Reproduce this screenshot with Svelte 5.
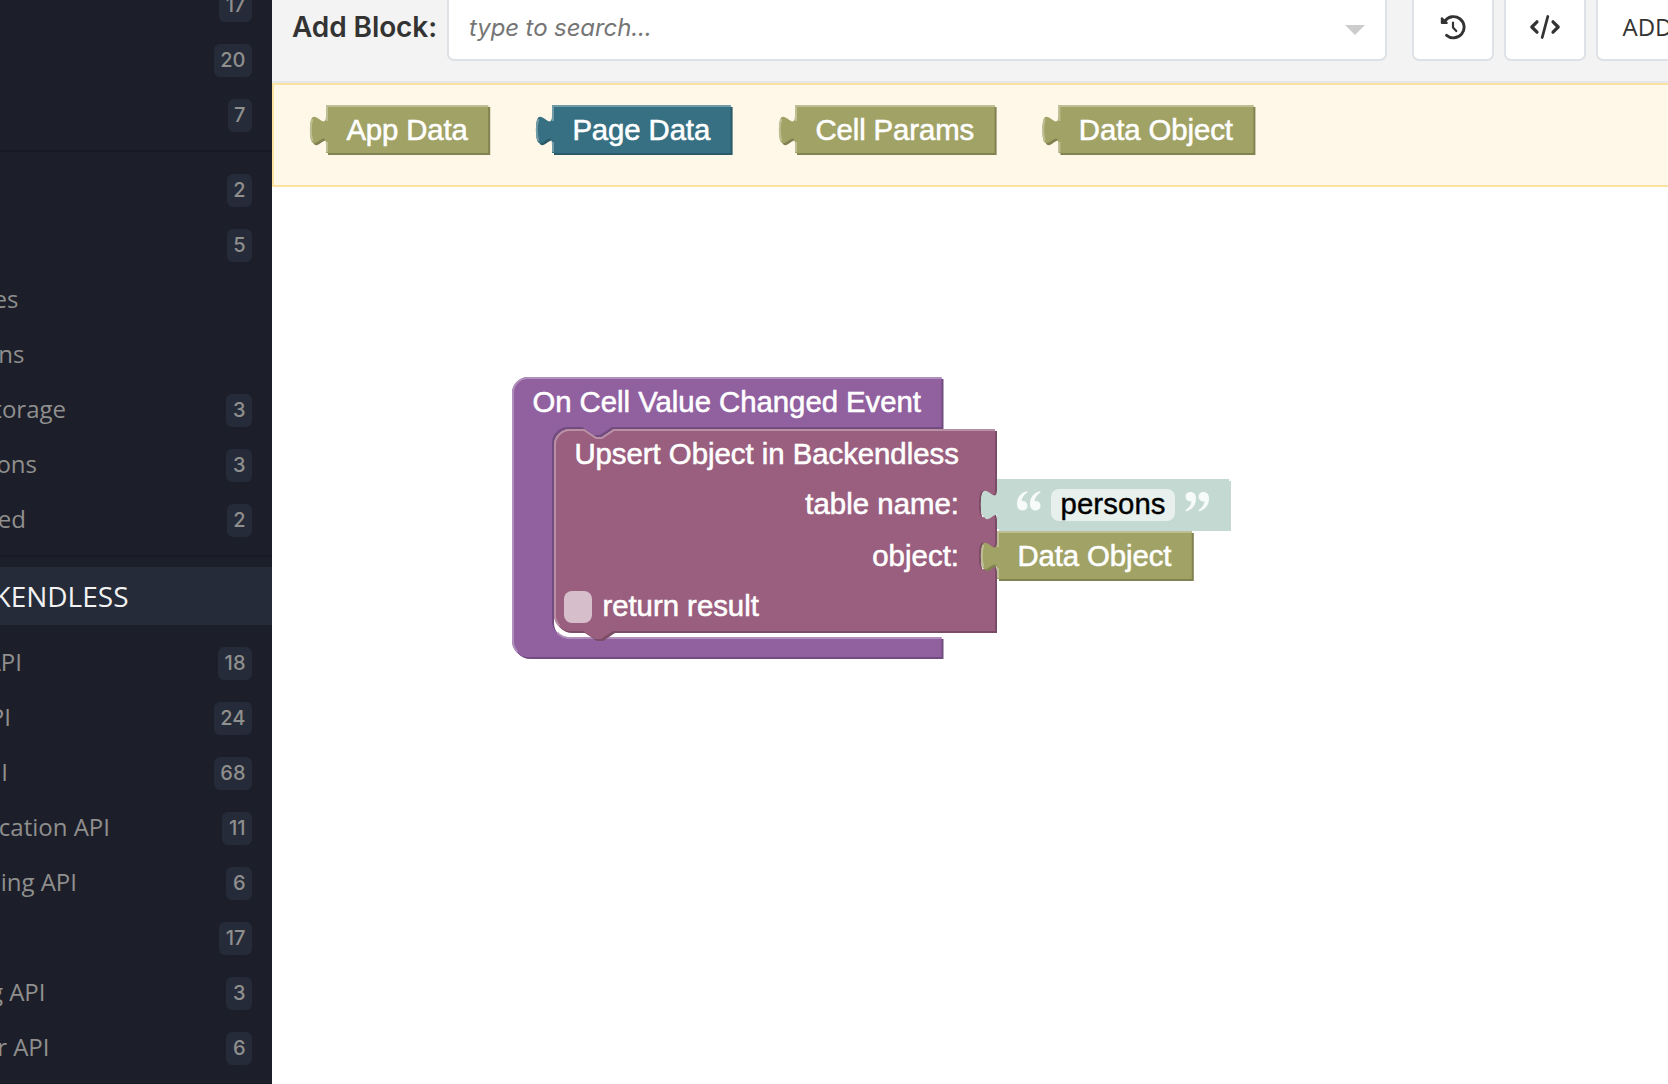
<script>
  const groups = [
    {
      first: true,
      rows: [
        { count: 17 },
        { count: 20 },
        { count: 7 }
      ]
    },
    {
      rows: [
        { count: 2 },
        { count: 5 },
        { label: 'es', end: 18.5 },
        { label: 'ns', end: 24.5 },
        { label: 'torage', end: 66, count: 3 },
        { label: 'ons', end: 37, count: 3 },
        { label: 'ed', end: 26, count: 2 }
      ]
    },
    {
      title: 'KENDLESS',
      rows: [
        { label: 'API', end: 22, count: 18 },
        { label: 'PI', end: 11, count: 24 },
        { label: 'I', end: 8, count: 68 },
        { label: 'cation API', end: 110, count: 11 },
        { label: 'ing API', end: 77, count: 6 },
        { count: 17 },
        { label: 'g API', end: 45.5, count: 3 },
        { label: 'r API', end: 49.5, count: 6 }
      ]
    }
  ];

  const olive = { main: '#a1a265', light: '#bdbe93', dark: '#818251' };
  const teal = { main: '#367082', light: '#729ba8', dark: '#2b5a68' };
  const mint = { main: '#c3d9d1', light: '#c3d9d1', dark: '#c3d9d1' };

  const recent = [
    { label: 'App Data', x: 54, w: 81.1, colors: olive },
    { label: 'Page Data', x: 280, w: 89.3, colors: teal },
    { label: 'Cell Params', x: 523, w: 99.8, colors: olive },
    { label: 'Data Object', x: 786.4, w: 97.5, colors: olive }
  ];

  const valuePath = (w, h) =>
    `M 0,0 H ${w} V ${h} H 0 V 20 c 0,-10 -8,8 -8,-7.5 s 8,2.5 8,-7.5 z`;
  const valueLight = (w, h) =>
    `M 0.5,${h - 0.5} V 18.5 m -7.36,-0.5 q -1.52,-5.5 0,-11 m 7.36,1 V 0.5 H ${w}`;

  const eventPath =
    'M 0,8 A 8,8 0 0,1 8,0 H 214.75 V 25 H 50 l -6,4 -3,0 -6,-4 h -7 a 8,8 0 0,0 -8,8 V 122 a 8,8 0 0,0 8,8 H 214.75 V 140 H 8 a 8,8 0 0,1 -8,-8 z';
  const socket = 'v 5 c 0,10 -8,-8 -8,7.5 s 8,-2.5 8,7.5';
  const upsertPath =
    `M 0,8 A 8,8 0 0,1 8,0 H 15 l 6,4 3,0 6,-4 H 220.5 V 25 ${socket} V 51 ${socket} V 101 H 29.5 l -6,4 -3,0 -6,-4 H 8 a 8,8 0 0,1 -8,-8 z`;
</script>

{#snippet valueBlock(x, y, w, h, colors, label)}
  <g transform="translate({x},{y}) scale(2)">
    <path d={valuePath(w, h)} transform="translate(1,1)" fill={colors.dark} />
    <path d={valuePath(w, h)} fill={colors.main} />
    <path d={valueLight(w, h)} fill="none" stroke={colors.light} />
    {#if label}
      <text x="10.2" y="17.5" textLength={w - 20.4}>{label}</text>
    {/if}
  </g>
{/snippet}

<div class="page">
  <aside class="sidebar">
    {#each groups as group}
      {#if group.title}
        <div class="title"><span style="width: 128.5px">{group.title}</span></div>
      {/if}
      <div class="group" class:first={group.first}>
        {#each group.rows as row}
          <div class="row">
            <span class="label" style="width: {row.end ?? 0}px">{row.label ?? ''}</span>
            {#if row.count}<span class="badge">{row.count}</span>{/if}
          </div>
        {/each}
      </div>
    {/each}
  </aside>

  <main class="main">
    <header class="toolbar">
      <strong class="caption">Add Block:</strong>
      <div class="search">
        <span class="placeholder">type to search...</span>
        <i class="caret"></i>
      </div>
      <div class="button">
        <svg width="26" height="26" viewBox="0 0 26 26" fill="none" stroke="#333" stroke-linecap="round" stroke-linejoin="round">
          <path d="M4.8 7.2A10.6 10.6 0 1 1 6.6 21.3" stroke-width="2.9" />
          <path d="M1.8 4.2 L1.8 9 L6.8 9 Z" stroke-width="2" fill="#333" />
          <path d="M13 8.5 V13.4 L16.3 17" stroke-width="2.2" />
        </svg>
      </div>
      <div class="button">
        <svg width="32" height="26" viewBox="0 0 32 26" fill="none" stroke="#333" stroke-linecap="round" stroke-linejoin="round" stroke-width="3.2">
          <path d="M8 7.8 L2.8 13 L8 18.2" />
          <path d="M24 7.8 L29.2 13 L24 18.2" />
          <path d="M18.8 2.5 L13.2 23.5" stroke-width="2.8" />
        </svg>
      </div>
      <div class="button wide">ADD</div>
    </header>

    <section class="recent">
      <svg width="1396" height="100">
        {#each recent as b}
          {@render valueBlock(b.x - 2, 20, b.w, 24, b.colors, b.label)}
        {/each}
      </svg>
    </section>

    <section class="workspace">
      <svg width="1396" height="897" viewBox="272 187 1396 897">
        <g transform="translate(512,377) scale(2)">
          <path d={eventPath} transform="translate(1,1)" fill="#724c7f" />
          <path d={eventPath} fill="#90609f" />
          <path
            d="M 0.5,132 V 8 A 7.5,7.5 0 0,1 8,0.5 H 214.75 M 22.7,127.8 A 8.5,8.5 0 0,0 28,130.5 H 214.75 M 2.7,137.3 A 7.5,7.5 0 0,1 0.5,132"
            fill="none"
            stroke="#b18fbc"
          />
          <text x="10.2" y="17.5" textLength="194.3">On Cell Value Changed Event</text>
        </g>
        <g transform="translate(554,429) scale(2)">
          <path d={upsertPath} transform="translate(1,1)" fill="#7b4c65" />
          <path d={upsertPath} fill="#9a5f7e" />
          <path
            d="M 2.7,98.3 A 7.5,7.5 0 0,1 0.5,93 V 8 A 7.5,7.5 0 0,1 8,0.5 H 15 l 6,4 3,0 6,-4 H 220.5"
            fill="none"
            stroke="#b88fa4"
          />
          <text x="10.2" y="17.5" textLength="192.2">Upsert Object in Backendless</text>
          <text x="125.6" y="42.5" textLength="76.9">table name:</text>
          <text x="159.1" y="68.5" textLength="43.4">object:</text>
          <rect x="5" y="81" width="14" height="16" rx="4" fill="#fff" fill-opacity="0.6" />
          <text x="24.2" y="93.5" textLength="78.2">return result</text>
        </g>
        {@render valueBlock(997, 479, 116, 25, mint, '')}
        {@render valueBlock(997, 531, 97.4, 24, olive, 'Data Object')}
        <rect x="1051" y="489" width="124" height="32" rx="8" fill="#fff" fill-opacity="0.6" />
        <text class="field" x="1060.500" y="514" textLength="105">persons</text>
        <g class="quotes" fill="#fff" fill-opacity="0.85">
          <g id="quote">
            <path d="M1027 491 C1020 493 1017 498 1017 504 C1017 508 1019 510.500 1022.500 510.500 C1025.500 510.500 1027.500 508.500 1027.500 505.700 C1027.500 503 1025.500 501 1023 501 L1021.500 501.200 C1022 497.500 1024 494.500 1027.500 492.500 Z" />
            <path d="M1040 491 C1033 493 1030 498 1030 504 C1030 508 1032 510.500 1035.500 510.500 C1038.500 510.500 1040.500 508.500 1040.500 505.700 C1040.500 503 1038.500 501 1036 501 L1034.500 501.200 C1035 497.500 1037 494.500 1040.500 492.500 Z" />
          </g>
          <use href="#quote" transform="rotate(180 1113 501.200)" />
        </g>
      </svg>
    </section>
  </main>
</div>

<style>
  :global(body) {
    margin: 0;
    overflow: hidden;
  }
  .page {
    display: flex;
    width: 1668px;
    height: 1084px;
    overflow: hidden;
    background: #fff;
  }
  .sidebar {
    width: 272px;
    flex: none;
    background: #1c1e29;
    font-family: 'Open Sans', sans-serif;
    color: #8f8f8e;
    overflow: hidden;
  }
  .group {
    padding: 11px 0 7px;
    border-bottom: 2px solid #181923;
  }
  .group.first {
    padding-top: 0;
    margin-top: -22px;
  }
  .row {
    display: flex;
    align-items: center;
    justify-content: space-between;
    height: 55px;
    padding-right: 20px;
  }
  .label,
  .title span {
    display: flex;
    justify-content: flex-end;
    overflow: hidden;
    white-space: nowrap;
    font-size: 24px;
    line-height: 36px;
  }
  .label {
    margin-bottom: 4px;
  }
  .badge {
    height: 33px;
    padding: 0 6.5px;
    border-radius: 6px;
    background: #252b38;
    font: 500 20px/33px Inter, sans-serif;
  }
  .title {
    display: flex;
    align-items: center;
    height: 58px;
    margin-top: 10px;
    background: #252b38;
    color: #f2f2f2;
  }
  .title span {
    font-size: 28px;
  }
  .main {
    display: flex;
    flex-direction: column;
    width: 1396px;
    flex: none;
  }
  .toolbar {
    display: flex;
    box-sizing: border-box;
    height: 83px;
    padding-left: 20px;
    background: #f3f3f3;
    border-bottom: 2px solid #e6e7e9;
    color: #333;
    overflow: hidden;
  }
  .caption {
    flex: none;
    width: 155px;
    font: 600 28px/54px Inter, sans-serif;
    letter-spacing: -0.1px;
    white-space: nowrap;
  }
  .search,
  .button {
    box-sizing: border-box;
    flex: none;
    display: flex;
    align-items: center;
    height: 71px;
    margin-top: -10px;
    border: 2px solid #dee2e6;
    border-radius: 7px;
    background: #fff;
  }
  .search {
    width: 940px;
    margin-right: 25px;
    padding: 4px 20px 0;
    justify-content: space-between;
  }
  .placeholder {
    font: italic 24px/36px Inter, sans-serif;
    letter-spacing: -0.1px;
    color: #757575;
  }
  .caret {
    border: 10px solid transparent;
    border-top-color: #ccc;
    border-bottom: 0;
    margin-top: 4px;
  }
  .button {
    width: 82px;
    margin-right: 10px;
    padding-top: 3px;
    justify-content: center;
    font: 24px/36px 'Open Sans', sans-serif;
  }
  .wide {
    width: 160px;
    justify-content: flex-start;
    padding-left: 24.5px;
  }
  .recent {
    box-sizing: border-box;
    width: 1410px;
    height: 104px;
    border: 2px solid #fae3a0;
    background: #fff8e8;
  }
  svg {
    display: block;
  }
  text {
    font-family: 'Liberation Sans', Arial, sans-serif;
    font-size: 14.667px;
    fill: #fff;
  }
  .recent text,
  .workspace g text {
    stroke: #fff;
    stroke-width: 0.28px;
  }
  text.field {
    font-size: 29.333px;
    fill: #000;
    stroke: #000;
    stroke-width: 0.4px;
  }
  .quotes {
    filter: blur(0.6px);
  }
</style>
